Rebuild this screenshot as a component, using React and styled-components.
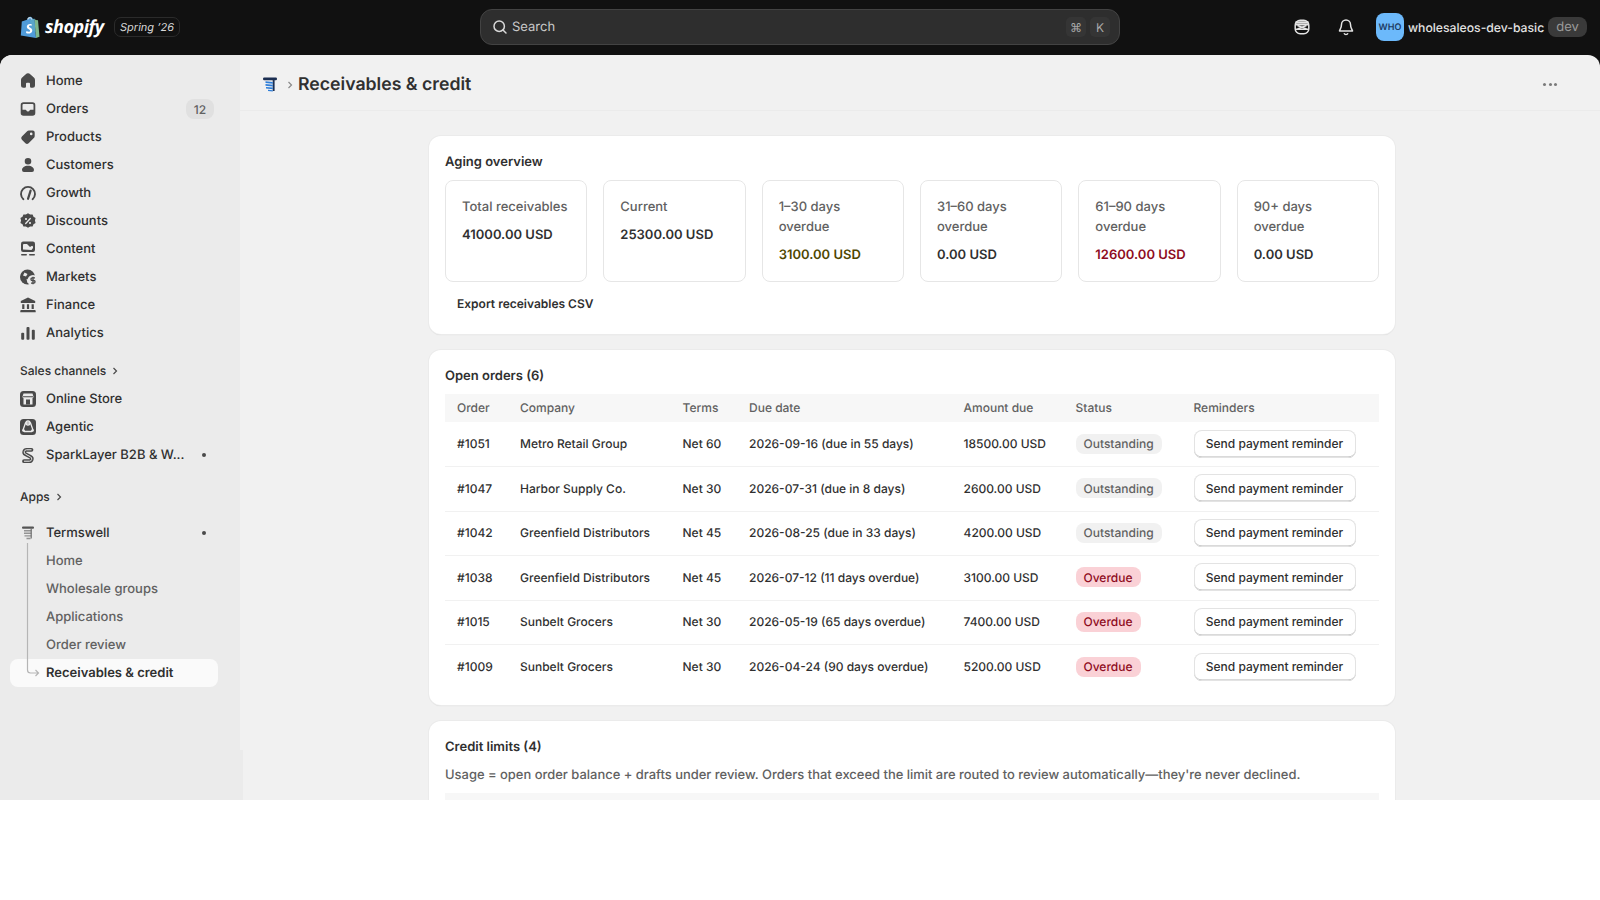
import React from 'react';
import styled, { createGlobalStyle } from 'styled-components';

const Global = createGlobalStyle`
  html, body { margin: 0; padding: 0; background: #fff; }
  body { font-family: Inter, "Liberation Sans", sans-serif; color: #303030; -webkit-font-smoothing: antialiased; text-rendering: geometricPrecision; }
  * { box-sizing: border-box; }
`;

const Frame = styled.div`width: 1600px; height: 800px; display: flex; flex-direction: column; overflow: hidden; background: #111;`;
const TopBar = styled.header`height: 55px; flex: none; display: flex; align-items: center; padding: 0 0 1px 20px; position: relative;`;
const Brand = styled.div`width: 460px; display: flex; align-items: center; flex: none;`;
const Wordmark = styled.span`font-family: "Open Sans", sans-serif; font-style: italic; font-weight: 700; font-size: 18px; letter-spacing: -0.5px; color: #fff; margin-left: 5px; width: 69px; white-space: nowrap;`;
const Season = styled.span`width: 66px; height: 20px; justify-content: center; border: 1px solid #2b2b2b; border-radius: 7px; font-size: 11px; font-style: italic; color: #d8d8d8; display: flex; align-items: center; white-space: nowrap;`;
const Search = styled.div`width: 640px; height: 36px; flex: none; background: #2e2e2e; border: 1px solid #434343; border-radius: 12px; display: flex; align-items: center; padding: 0 9px 0 10px; color: #c9c9c9; font-size: 13px;`;
const SearchText = styled.span`flex: 1; margin-left: 3px;`;
const Kbd = styled.span`width: 20px; height: 20px; margin-left: 4px; border-radius: 5px; background: #353535; color: #a8a8a8; font-size: 12px; display: flex; align-items: center; justify-content: center;`;
const TopRight = styled.div`flex: 1; display: flex; align-items: center; padding-left: 172px;`;
const TopIcon = styled.span`width: 20px; height: 20px; display: flex; color: #e3e3e3; margin-right: ${p => p.$mr}px;`;
const Avatar = styled.span`width: 28px; height: 28px; flex: none; border-radius: 8px; background: #6cb9fb; color: #1c3a63; font-size: 9px; font-weight: 600; display: flex; align-items: center; justify-content: center;`;
const StoreName = styled.span`color: #e3e3e3; font-size: 12.2px; font-weight: 450; margin-left: 4px; white-space: nowrap;`;
const DevPill = styled.span`height: 20px; padding: 0 8px; margin-left: 4px; border-radius: 8px; background: #3a3a3a; color: #9a9a9a; font-size: 13px; display: flex; align-items: center;`;

const Body = styled.div`flex: 1; min-height: 0; display: flex; background: #f1f1f1; border-radius: 12px 12px 0 0; overflow: hidden;`;
const Side = styled.aside`width: 240px; flex: none; display: flex; flex-direction: column; background: #ebebeb;`;
const Nav = styled.nav`flex: 1; padding-top: 12px;`;
const SideFoot = styled.div`height: 50px; width: 243px; flex: none; background: #ebebeb; position: relative; z-index: 1;`;
const Item = styled.div`height: 28px; margin: 0 22px 0 10px; padding: 0 4px 0 8px; border-radius: 8px; display: flex; align-items: center; gap: 8px; font-size: 13px; font-weight: ${p => p.$active ? 600 : 500}; color: ${p => p.$sub ? '#616161' : '#303030'}; background: ${p => p.$active ? '#fafafa' : 'transparent'}; position: relative;`;
const ItemIcon = styled.span`width: 20px; height: 20px; flex: none; display: flex; color: #4a4a4a;`;
const ItemLabel = styled.span`flex: 1; white-space: nowrap;`;
const SubSpacer = styled.span`width: 20px; flex: none;`;
const Count = styled.span`height: 20px; width: 28px; border-radius: 8px; background: #e0e0e0; color: #616161; font-size: 12px; display: flex; align-items: center; justify-content: center;`;
const Dot = styled.span`width: 4px; height: 4px; border-radius: 50%; background: #4a4a4a; margin-right: 8px;`;
const Section = styled.div`height: 28px; margin: ${p => p.$mt}px 0 0 20px; padding-bottom: 1px; display: flex; align-items: center; gap: 4px; font-size: 12px; font-weight: 500; color: #303030;`;
const AppGroup = styled.div`margin-top: 8px; position: relative;`;
const Tree = styled.svg`position: absolute; left: 26px; top: 24px; z-index: 1;`;

const Main = styled.main`flex: 1; min-width: 0; display: flex; flex-direction: column;`;
const PageHead = styled.div`height: 56px; flex: none; border-bottom: 1px solid #ebebeb; display: flex; align-items: center; padding: 4px 43px 0 20px;`;
const Crumb = styled.span`width: 20px; height: 20px; display: flex; margin-right: 5px;`;
const Chevron = styled.svg`flex: none;`;
const Title = styled.h1`margin: 0 0 0 3px; flex: 1; font-size: 17.7px; font-weight: 600; color: #303030;`;
const Dots = styled.span`display: flex; gap: 2.5px;`;
const DotSm = styled.i`width: 3px; height: 3px; border-radius: 50%; background: #7a7a7a;`;
const Content = styled.div`width: 966px; margin-left: 189px; padding-top: 25px; display: flex; flex-direction: column; gap: 16px;`;
const Card = styled.section`background: #fff; border-radius: 12px; padding: 16px; box-shadow: 0 0 0 1px #ebebeb, 0 1px 1px rgba(0,0,0,.15); flex: none;`;
const WideCard = styled(Card)`padding-bottom: 20px;`;
const CardTitle = styled.h2`margin: 0; height: 20px; line-height: 20px; font-size: 13px; font-weight: 600; color: #303030;`;
const Metrics = styled.div`display: grid; grid-template-columns: repeat(6, 1fr); gap: 16px; margin-top: 8px;`;
const Metric = styled.div`height: 102px; border: 1px solid #e6e6e6; border-radius: 8px; padding: 16px;`;
const MetricLabel = styled.div`font-size: 13px; line-height: 20px; color: #616161; font-weight: 450;`;
const MetricValue = styled.div`margin-top: 8px; font-size: 13px; line-height: 20px; font-weight: 600; color: ${p => p.$tone || '#303030'};`;
const PlainBtn = styled.div`margin: 12px 0 0 12px; height: 20px; line-height: 20px; font-size: 12px; font-weight: 600; color: #303030;`;
const Table = styled.table`width: 934px; margin-top: 8px; border-collapse: collapse; table-layout: fixed; font-size: 12px;`;
const Th = styled.th`height: 28px; padding: 0 0 1px 12px; background: #f7f7f7; text-align: left; font-weight: 500; color: #616161; width: ${p => p.$w}px;`;
const Tr = styled.tr`height: 44.5px; border-top: 1px solid #f1f1f1; &:first-child { border-top: 0; }`;
const Td = styled.td`padding: 0 0 1px 12px; color: #303030; font-weight: 450; white-space: nowrap;`;
const Badge = styled.span`display: inline-flex; align-items: center; height: 20px; padding: 0 8px; border-radius: 8px; font-weight: 500; background: ${p => p.$bad ? '#fad1d6' : '#f1f1f1'}; color: ${p => p.$bad ? '#8e0b21' : '#616161'};`;
const Btn = styled.button`font: inherit; font-weight: 550; height: 28px; width: 162px; background: #fff; color: #303030; border: 0; border-radius: 8px; box-shadow: inset 0 0 0 1px #e3e3e3, inset 0 -1.5px 0 #b5b5b5; padding: 0; display: block;`;
const Desc = styled.p`margin: 8px 0 0; font-size: 12.94px; line-height: 20px; color: #616161; font-weight: 450;`;
const Stub = styled.div`height: 28px; margin-top: 8px; background: #f7f7f7;`;

const Ic = ({ d, children, c = 'currentColor' }) => (
  <svg width="20" height="20" viewBox="0 0 20 20" fill={c}>{d && <path d={d} fillRule="evenodd" />}{children}</svg>
);

const bg = '#ebebeb';

const icons = {
  home: <Ic d="M12.500 3.400a3.750 3.750 0 0 0-5 0l-3.600 3.300A3 3 0 0 0 3 8.900v5.400A2.500 2.500 0 0 0 5.500 16.800h1.300a1.200 1.200 0 0 0 1.200-1.200v-2.900a1 1 0 0 1 1-1h2a1 1 0 0 1 1 1v2.900a1.200 1.200 0 0 0 1.200 1.200h1.300a2.500 2.500 0 0 0 2.500-2.500V8.900a3 3 0 0 0-.9-2.200z" />,
  orders: <Ic d="M5.500 3.200h9A2.800 2.800 0 0 1 17.300 6v8a2.800 2.800 0 0 1-2.800 2.800h-9A2.800 2.800 0 0 1 2.700 14V6a2.800 2.800 0 0 1 2.800-2.800zM5.500 5A1 1 0 0 0 4.500 6v4.700h3a.8.8 0 0 1 .8.600 1.800 1.800 0 0 0 3.400 0 .8.8 0 0 1 .8-.6h3V6a1 1 0 0 0-1-1z" />,
  products: <Ic d="M11 3.500h3.700a2 2 0 0 1 2 2V9a3 3 0 0 1-.9 2.100l-5.200 5.200a2.300 2.300 0 0 1-3.200 0l-3.500-3.500a2.300 2.300 0 0 1 0-3.200l5-5.200A3 3 0 0 1 11 3.500zM13.200 8.200a1.300 1.300 0 1 0 0-2.600 1.300 1.300 0 0 0 0 2.600z" />,
  customers: <Ic d="M10 3a3.300 3.300 0 1 1 0 6.600A3.300 3.300 0 0 1 10 3zM10 10.700c3.600 0 6 1.900 6 4.300a2 2 0 0 1-2 2H6a2 2 0 0 1-2-2c0-2.400 2.400-4.300 6-4.300z" />,
  growth: (
    <Ic c="none">
      <path d="M5.400 16.200A7 7 0 1 1 14.600 16.200" stroke="currentColor" strokeWidth="1.900" strokeLinecap="round" />
      <path d="M10 15.800 12.600 7.600" stroke="currentColor" strokeWidth="2.200" strokeLinecap="round" />
    </Ic>
  ),
  discounts: (
    <Ic>
      <path d="M10 2.200l2.100 1.400 2.500-.2.900 2.300 2.100 1.400-.7 2.400.7 2.400-2.100 1.400-.9 2.300-2.500-.2-2.100 1.400-2.100-1.400-2.500.2-.9-2.300-2.100-1.400.7-2.400-.7-2.400 2.100-1.400.9-2.300 2.500.2z" />
      <path d="M12.300 7.500 7.700 12.500" stroke={bg} strokeWidth="1.300" strokeLinecap="round" />
      <circle cx="8" cy="8" r="1.100" fill={bg} />
      <circle cx="12" cy="12" r="1.100" fill={bg} />
    </Ic>
  ),
  content: (
    <Ic>
      <rect x="3" y="2.500" width="14" height="10.500" rx="2.200" />
      <path d="M5 10.500V6a1 1 0 0 1 1-1h3l3 3 2-1.200 1 .8v1.500l-1.500 1.900z" fill={bg} />
      <circle cx="12.500" cy="5.800" r="1" />
      <rect x="3" y="15" width="6" height="1.600" rx=".8" />
      <rect x="11" y="15" width="6" height="1.600" rx=".8" />
    </Ic>
  ),
  markets: (
    <Ic>
      <circle cx="9.500" cy="10" r="7.500" />
      <path d="M6.500 5.500 9.500 7 8 9.500 5 8.500zM8.500 12l2.500.500.500 2.500-2 1z" fill={bg} />
      <circle cx="15" cy="13.500" r="5.500" fill={bg} />
      <path d="M17 10.800h-2.700a1.300 1.300 0 0 0 0 2.700h1.400a1.300 1.300 0 0 1 0 2.700H13M15 9.700v7.600" fill="none" stroke="currentColor" strokeWidth="1.300" />
    </Ic>
  ),
  finance: (
    <Ic d="M10 2.600l7.200 3.500v2H2.800v-2zM4.200 9.300h2.200v4.600H4.200zM8.900 9.300h2.200v4.600H8.900zM13.600 9.300h2.200v4.600h-2.200zM3.200 15h13.600a.9.9 0 0 1 .9.900v1.300H2.300v-1.300a.9.9 0 0 1 .9-.9z" />
  ),
  analytics: (
    <Ic>
      <rect x="3.200" y="9.800" width="3" height="7" rx="1" />
      <rect x="8.500" y="4" width="3" height="12.800" rx="1" />
      <rect x="13.800" y="6.800" width="3" height="10" rx="1" />
    </Ic>
  ),
  store: (
    <Ic>
      <rect x="2" y="2" width="16" height="16" rx="3.500" />
      <path d="M5.500 4.500h9l1 3a1.700 1.700 0 0 1-1 1.800V15.500h-9V9.300a1.700 1.700 0 0 1-1-1.800z" fill={bg} />
      <path d="M8 10.500h4v5H8zM5 7.300h10v1H5z" />
    </Ic>
  ),
  agentic: (
    <Ic>
      <rect x="2" y="2" width="16" height="16" rx="3.500" />
      <path d="M7.500 6h5L15 13l-1.500 1.500h-7L5 13z" fill="none" stroke={bg} strokeWidth="1.300" />
      <circle cx="10" cy="6" r="2" fill="none" stroke={bg} strokeWidth="1.300" />
      <circle cx="5.500" cy="13.500" r="1.300" fill={bg} />
      <circle cx="14.500" cy="13.500" r="1.300" fill={bg} />
    </Ic>
  ),
  spark: (
    <Ic c="none">
      <path d="M13.500 4.800H8.600a2.300 2.300 0 0 0-1.200 4.300l5.200 2.800a2.300 2.300 0 0 1-1.200 4.300H6" stroke="currentColor" strokeWidth="3.800" strokeLinecap="round" />
      <path d="M13.500 4.800H8.600a2.300 2.300 0 0 0-1.200 4.300l5.200 2.800a2.300 2.300 0 0 1-1.200 4.300H6" stroke={bg} strokeWidth="1" />
    </Ic>
  ),
  terms: (
    <Ic c="#6f6f6f">
      <rect x="4" y="3.500" width="12" height="2.300" rx="1" fill="#555" />
      <path d="M6 7h7.500v1.400H6zM6 9.600h7.500V11H6zM6.500 12.200h7v1.400h-7zM8.500 14.800h4v1.400h-4z" opacity=".7" />
      <rect x="12.500" y="5.500" width="1.500" height="10" opacity=".8" />
    </Ic>
  ),
  termsColor: (
    <Ic c="#1c2f52">
      <rect x="3" y="2.500" width="14" height="2.700" rx="1.200" />
      <rect x="12.700" y="5" width="1.900" height="11" />
      <path d="M5.500 6.300 12.800 7v1.700L5.500 8zM5.500 9.100l7.300.7v1.700l-7.300-.7zM6 11.900l6.800.7v1.700L6 13.600zM8 14.700l4.800.5v1.300L8 16z" fill="#2f7ed8" />
    </Ic>
  ),
};

const mainNav = [
  ['home', 'Home'], ['orders', 'Orders', '12'], ['products', 'Products'], ['customers', 'Customers'],
  ['growth', 'Growth'], ['discounts', 'Discounts'], ['content', 'Content'], ['markets', 'Markets'],
  ['finance', 'Finance'], ['analytics', 'Analytics'],
];
const channels = [['store', 'Online Store'], ['agentic', 'Agentic'], ['spark', 'SparkLayer B2B & W...', null, true]];
const subs = ['Home', 'Wholesale groups', 'Applications', 'Order review'];

const metrics = [
  ['Total receivables', '41000.00 USD'], ['Current', '25300.00 USD'],
  ['1–30 days overdue', '3100.00 USD', '#4f4700'], ['31–60 days overdue', '0.00 USD'],
  ['61–90 days overdue', '12600.00 USD', '#8e0b21'], ['90+ days overdue', '0.00 USD'],
];
const cols = [['Order', 63], ['Company', 162.5], ['Terms', 66.5], ['Due date', 214.5], ['Amount due', 112], ['Status', 118], ['Reminders', 197.5]];
const orders = [
  ['#1051', 'Metro Retail Group', 'Net 60', '2026-09-16 (due in 55 days)', '18500.00 USD', 0],
  ['#1047', 'Harbor Supply Co.', 'Net 30', '2026-07-31 (due in 8 days)', '2600.00 USD', 0],
  ['#1042', 'Greenfield Distributors', 'Net 45', '2026-08-25 (due in 33 days)', '4200.00 USD', 0],
  ['#1038', 'Greenfield Distributors', 'Net 45', '2026-07-12 (11 days overdue)', '3100.00 USD', 1],
  ['#1015', 'Sunbelt Grocers', 'Net 30', '2026-05-19 (65 days overdue)', '7400.00 USD', 1],
  ['#1009', 'Sunbelt Grocers', 'Net 30', '2026-04-24 (90 days overdue)', '5200.00 USD', 1],
];

const Bag = () => (
  <svg width="20" height="23" viewBox="0 0 20 23">
    <path d="M1.800 5.500 7 3.800C7.500 1.800 9 .5 10.500.8c1 .2 2 1 2.400 2.200l1.400-.3L16 22 .8 19.500z" fill="#4f9bd9" />
    <path d="M14.300 2.700 16 22l3.500-1.300L18 4.200 15.900 4z" fill="#7fb78c" />
    <path d="M10 4 14.300 2.700 15.500 16 12 14z" fill="#5aa7c9" />
    <path d="M7.800 3.500c.4-1.400 1.500-2.200 2.700-1.800.8.300 1.300 1 1.500 2" stroke="#cfd9dd" strokeWidth="1.100" fill="none" />
    <path d="M11.800 8.200c-2.800-.9-5 .4-5 2.500 0 2.400 3.300 2.500 3.300 4 0 1.400-2 1.300-3.600.3l-.5 2c2.500 1.200 6.300.7 6.300-2.500 0-2.700-3.300-2.800-3.300-4 0-1 1.500-1.100 2.400-.6z" fill="#fff" />
  </svg>
);

function ChevronSm() {
  return (
    <svg width="10" height="10" viewBox="0 0 10 10" fill="none" stroke="#4a4a4a" strokeWidth="1.200"><path d="m3.500 2 3 3-3 3" /></svg>
  );
}

export default function App() {
  return (
    <>
      <Global />
      <Frame>
        <TopBar>
          <Brand>
            <Bag />
            <Wordmark>shopify</Wordmark>
            <Season>Spring ’26</Season>
          </Brand>
          <Search>
            <svg width="18" height="18" viewBox="0 0 18 18" fill="none" stroke="#d8d8d8" strokeWidth="1.500" strokeLinecap="round"><circle cx="8.200" cy="8.200" r="5.200" /><path d="m12 12 3 3" /></svg>
            <SearchText>Search</SearchText>
            <Kbd>⌘</Kbd>
            <Kbd>K</Kbd>
          </Search>
          <TopRight>
            <TopIcon $mr={24}>
              <svg width="20" height="20" viewBox="0 0 20 20" fill="none" stroke="currentColor" strokeWidth="1.500"><rect x="3.200" y="3.200" width="13.600" height="13.600" rx="5" /><path d="M3.500 7.800h13M3.500 12.200h13" /><path d="M5.500 8.500 14.500 12M14.500 8.500 5.500 12" /><path d="M3.500 5.500h13" strokeWidth="2.500" /></svg>
            </TopIcon>
            <TopIcon $mr={20}>
              <svg width="20" height="20" viewBox="0 0 20 20" fill="none" stroke="currentColor" strokeWidth="1.500" strokeLinejoin="round"><path d="M10 3a4.500 4.500 0 0 0-4.500 4.500c0 3.500-1.700 5-2 6.500h13c-.3-1.500-2-3-2-6.500A4.500 4.500 0 0 0 10 3z" /><path d="M8 16.200a2.200 2.200 0 0 0 4 0" /></svg>
            </TopIcon>
            <Avatar>WHO</Avatar>
            <StoreName>wholesaleos-dev-basic</StoreName>
            <DevPill>dev</DevPill>
          </TopRight>
        </TopBar>
        <Body>
          <Side>
            <Nav>
              {mainNav.map(([k, label, count]) => (
                <Item key={label}>
                  <ItemIcon>{icons[k]}</ItemIcon>
                  <ItemLabel>{label}</ItemLabel>
                  {count && <Count>{count}</Count>}
                </Item>
              ))}
              <Section $mt={10}>Sales channels <ChevronSm /></Section>
              {channels.map(([k, label, , dot]) => (
                <Item key={label}>
                  <ItemIcon>{icons[k]}</ItemIcon>
                  <ItemLabel>{label}</ItemLabel>
                  {dot && <Dot />}
                </Item>
              ))}
              <Section $mt={14}>Apps <ChevronSm /></Section>
              <AppGroup>
                <Tree width="16" height="138" viewBox="0 0 16 138" fill="none" stroke="#b5b5b5" strokeWidth="1.200">
                  <path d="M1.500 0v127a3 3 0 0 0 3 3h8M9.500 127l3 3-3 3" />
                </Tree>
                <Item>
                  <ItemIcon>{icons.terms}</ItemIcon>
                  <ItemLabel>Termswell</ItemLabel>
                  <Dot />
                </Item>
                {subs.map(s => (
                  <Item $sub key={s}><SubSpacer /><ItemLabel>{s}</ItemLabel></Item>
                ))}
                <Item $active><SubSpacer /><ItemLabel>Receivables &amp; credit</ItemLabel></Item>
              </AppGroup>
            </Nav>
            <SideFoot />
          </Side>
          <Main>
            <PageHead>
              <Crumb>{icons.termsColor}</Crumb>
              <Chevron width="10" height="10" viewBox="0 0 10 10" fill="none" stroke="#8a8a8a" strokeWidth="1.200"><path d="m3.500 2 3 3-3 3" /></Chevron>
              <Title>Receivables &amp; credit</Title>
              <Dots><DotSm /><DotSm /><DotSm /></Dots>
            </PageHead>
            <Content>
              <WideCard>
                <CardTitle>Aging overview</CardTitle>
                <Metrics>
                  {metrics.map(([l, v, t]) => (
                    <Metric key={l}>
                      <MetricLabel>{l}</MetricLabel>
                      <MetricValue $tone={t}>{v}</MetricValue>
                    </Metric>
                  ))}
                </Metrics>
                <PlainBtn>Export receivables CSV</PlainBtn>
              </WideCard>
              <Card>
                <CardTitle>Open orders (6)</CardTitle>
                <Table>
                  <thead>
                    <tr>{cols.map(([c, w]) => <Th key={c} $w={w}>{c}</Th>)}</tr>
                  </thead>
                  <tbody>
                    {orders.map(o => (
                      <Tr key={o[0]}>
                        <Td>{o[0]}</Td>
                        <Td>{o[1]}</Td>
                        <Td>{o[2]}</Td>
                        <Td>{o[3]}</Td>
                        <Td>{o[4]}</Td>
                        <Td><Badge $bad={!!o[5]}>{o[5] ? 'Overdue' : 'Outstanding'}</Badge></Td>
                        <Td><Btn>Send payment reminder</Btn></Td>
                      </Tr>
                    ))}
                  </tbody>
                </Table>
              </Card>
              <Card>
                <CardTitle>Credit limits (4)</CardTitle>
                <Desc>Usage = open order balance + drafts under review. Orders that exceed the limit are routed to review automatically—they're never declined.</Desc>
                <Stub />
              </Card>
            </Content>
          </Main>
        </Body>
      </Frame>
    </>
  );
}
